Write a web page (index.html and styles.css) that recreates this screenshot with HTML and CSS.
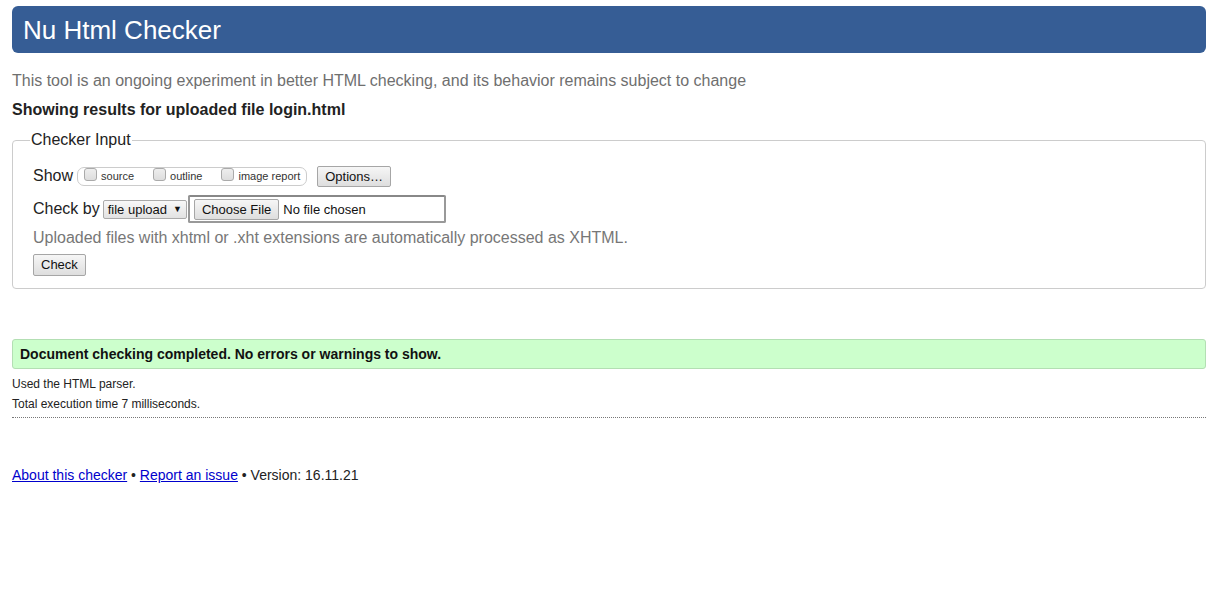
FILE: index.html
```html
<!DOCTYPE html>
<html>
<head>
<meta charset="utf-8">
<title>Nu Html Checker</title>
<link rel="stylesheet" href="styles.css">
</head>
<body>
<header class="banner"><h1 class="title">Nu Html Checker</h1></header>
<p class="intro">This tool is an ongoing experiment in better HTML checking, and its behavior remains subject to change</p>
<p class="showing">Showing results for uploaded file login.html</p>
<fieldset class="input-box">
  <legend class="legend">Checker Input</legend>
  <div class="row show-row">
    <span class="row-label">Show</span>
    <span class="opts">
      <label class="opt"><span class="cb"></span>source</label>
      <label class="opt"><span class="cb"></span>outline</label>
      <label class="opt"><span class="cb"></span>image report</label>
    </span>
    <button class="btn options-btn">Options…</button>
  </div>
  <div class="row check-row">
    <span class="row-label">Check by</span>
    <span class="select">file upload <span class="arrow">▼</span></span>
    <span class="file-box"><button class="btn choose-btn">Choose File</button><span class="nofile">No file chosen</span></span>
  </div>
  <p class="help">Uploaded files with xhtml or .xht extensions are automatically processed as XHTML.</p>
  <button class="btn check-btn">Check</button>
</fieldset>
<div class="success">Document checking completed. No errors or warnings to show.</div>
<p class="details first">Used the HTML parser.</p>
<p class="details">Total execution time 7 milliseconds.</p>
<hr class="rule">
<p class="footer"><a href="#">About this checker</a> • <a href="#">Report an issue</a> • Version: 16.11.21</p>
</body>
</html>
```
FILE: styles.css
```css
html, body { margin: 0; padding: 0; background: #fff; }
body {
  font-family: "Liberation Sans", Arial, sans-serif;
  color: #222;
  padding: 6px 16px 0 12px;
}
.banner {
  background: #365d95;
  border-radius: 6px;
  height: 47px;
  display: flex;
  align-items: center;
  padding: 0 11px;
}
.title {
  margin: 0;
  color: #fff;
  font-weight: normal;
  font-size: 26px;
  line-height: 30px;
}
.intro {
  margin: 18px 0 0;
  font-size: 16px;
  line-height: 20px;
  color: #6f6f6f;
}
.showing {
  margin: 9px 0 0;
  font-size: 16px;
  line-height: 20px;
  font-weight: bold;
  color: #222;
}
.input-box {
  margin: 11px 0 0;
  border: 1px solid #ccc;
  border-radius: 4px;
  padding: 12px 20px 12px 20px;
  min-width: 0;
}
.legend {
  font-size: 16px;
  padding: 0 1px;
  margin-left: -3px;
  color: #222;
}
.row {
  display: flex;
  align-items: center;
  font-size: 16px;
}
.row-label { color: #222; }
.show-row { height: 22px; margin-top: 4px; }
.opts {
  display: inline-flex;
  align-items: center;
  border: 1px solid #ccc;
  border-radius: 7px;
  height: 17px;
  padding: 0 6px 0 6px;
  margin-left: 4px;
}
.opt {
  display: inline-flex;
  align-items: center;
  font-size: 11px;
  color: #333;
  margin-right: 19px;
}
.opt:last-child { margin-right: 0; }
.cb {
  width: 11px;
  height: 11px;
  border: 1px solid #aaa;
  border-radius: 3px;
  background: linear-gradient(#eee, #ddd);
  margin-right: 4px;
  margin-top: -4px;
}
.btn {
  font-family: "Liberation Sans", Arial, sans-serif;
  font-size: 13px;
  color: #111;
  background: linear-gradient(#f6f6f6, #dedede);
  border: 1px solid #a6a6a6;
  border-radius: 2px;
  padding: 0 7px;
  height: 21px;
  line-height: 19px;
}
.options-btn { margin-left: 10px; }
.check-row { margin-top: 8px; height: 28px; }
.select {
  display: inline-flex;
  align-items: center;
  height: 17px;
  border: 1px solid #aaa;
  border-radius: 2px;
  background: linear-gradient(#f8f8f8, #e2e2e2);
  font-size: 13px;
  padding: 0 4px;
  margin-left: 3px;
  color: #111;
}
.arrow { font-size: 9px; margin-left: 6px; }
.file-box {
  display: inline-flex;
  align-items: center;
  box-sizing: border-box;
  width: 258px;
  height: 28px;
  border: 2px solid #999;
  border-radius: 2px;
  border-top-color: #888;
  margin-left: 1px;
  padding-left: 4px;
}
.choose-btn { height: 21px; padding: 0 7px; }
.nofile { font-size: 13px; margin-left: 4px; color: #111; }
.help {
  margin: 5px 0 0;
  font-size: 16px;
  line-height: 20px;
  color: #777;
}
.check-btn { margin-top: 6px; height: 22px; line-height: 20px; }
.success {
  margin-top: 50px;
  background: #ccffcc;
  border: 1px solid #b3dfb3;
  border-radius: 3px;
  height: 28px;
  line-height: 28px;
  padding: 0 7px;
  font-size: 14px;
  font-weight: bold;
  color: #111;
}
.details {
  margin: 0;
  font-size: 12px;
  line-height: 20px;
  color: #222;
}
.details.first { margin-top: 5px; }
.rule {
  margin: 3px 0 0;
  border: 0;
  border-top: 1px dotted #777;
  height: 0;
}
.footer {
  margin: 47px 0 0;
  font-size: 14px;
  line-height: 20px;
  color: #222;
}
.footer a { color: #00c; }
```
